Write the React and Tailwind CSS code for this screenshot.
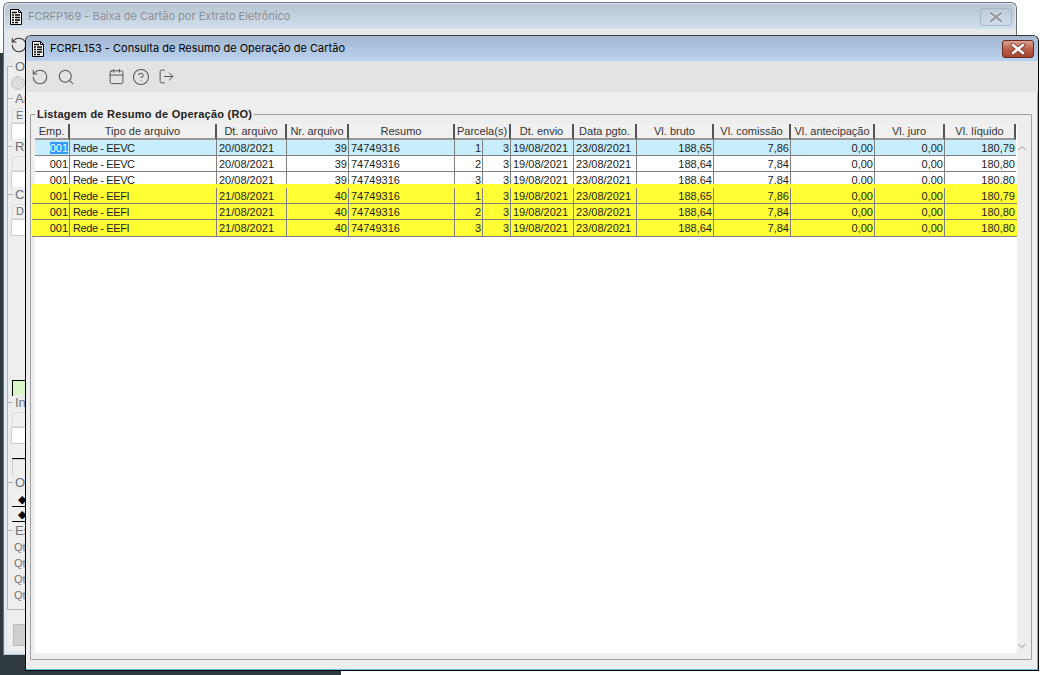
import { RotateCcw, Search, Calendar, CircleHelp, LogOut, ChevronUp, ChevronDown } from 'lucide-react'

const columns = [
  { label: 'Emp.', w: 'w-[35px]' },
  { label: 'Tipo de arquivo', w: 'w-[147px]' },
  { label: 'Dt. arquivo', w: 'w-[70px]' },
  { label: 'Nr. arquivo', w: 'w-[62px]' },
  { label: 'Resumo', w: 'w-[106px]' },
  { label: 'Parcela(s)', w: 'w-[56px]' },
  { label: 'Dt. envio', w: 'w-[63px]' },
  { label: 'Data pgto.', w: 'w-[63px]' },
  { label: 'Vl. bruto', w: 'w-[77px]' },
  { label: 'Vl. comissão', w: 'w-[77px]' },
  { label: 'Vl. antecipação', w: 'w-[84px]' },
  { label: 'Vl. juro', w: 'w-[70px]' },
  { label: 'Vl. líquido', w: 'w-[71px]' },
]

const rows = [
  { tipo: 'Rede - EEVC', dt: '20/08/2021', nr: 39, parc: 1, bruto: '188,65', com: '7,86', liq: '180,79' },
  { tipo: 'Rede - EEVC', dt: '20/08/2021', nr: 39, parc: 2, bruto: '188,64', com: '7,84', liq: '180,80' },
  { tipo: 'Rede - EEVC', dt: '20/08/2021', nr: 39, parc: 3, bruto: '188,64', com: '7,84', liq: '180,80' },
  { tipo: 'Rede - EEFI', dt: '21/08/2021', nr: 40, parc: 1, bruto: '188,65', com: '7,86', liq: '180,79' },
  { tipo: 'Rede - EEFI', dt: '21/08/2021', nr: 40, parc: 2, bruto: '188,64', com: '7,84', liq: '180,80' },
  { tipo: 'Rede - EEFI', dt: '21/08/2021', nr: 40, parc: 3, bruto: '188,64', com: '7,84', liq: '180,80' },
]

function DocIcon() {
  return (
    <svg width="14" height="16" viewBox="0 0 14 16" className="shrink-0">
      <path d="M1.5 .5H9.5L12.5 3.5V15.5H1.5Z" fill="#fff" stroke="#000" />
      <path d="M9.5 .5V3.5H12.5" fill="none" stroke="#000" />
      <path d="M3 3.5H8M3 6H5M6 6H11M3 8.5H5M6 8.5H11M3 11H5M6 11H11M3 13.5H5M6 13.5H9" stroke="#000" strokeWidth="1.6" />
    </svg>
  )
}

function CloseGlyph({ color, outline }) {
  return (
    <svg width="16" height="12" viewBox="0 0 16 12">
      <path d="M3 2L13 10M13 2L3 10" stroke={outline} strokeWidth="4.4" strokeLinecap="round" />
      <path d="M3 2L13 10M13 2L3 10" stroke={color} strokeWidth="2.6" strokeLinecap="round" />
    </svg>
  )
}

function Cell({ w, right, last, className = '', children }) {
  return (
    <div className={`${w} shrink-0 h-full overflow-hidden whitespace-nowrap leading-[16px] ${right ? 'text-right pr-[1px]' : 'pl-[2px]'} ${last ? '' : 'border-r border-[#808080]'} ${className}`}>
      {children}
    </div>
  )
}

function Row({ row, first, height = 'h-4', noBorder, className = '' }) {
  return (
    <div className={`flex ${height} overflow-hidden ${noBorder ? '' : 'border-b border-[#808080]'} ${first ? 'bg-[#c8eefe]' : ''} ${className}`}>
      <Cell w="w-[35px]" right>
        {first ? <span className="bg-[#3399ff] text-white">001</span> : '001'}
      </Cell>
      <Cell w="w-[147px]" className="pl-[3px] tracking-[-0.4px]">{row.tipo}</Cell>
      <Cell w="w-[70px]">{row.dt}</Cell>
      <Cell w="w-[62px]" right>{row.nr}</Cell>
      <Cell w="w-[106px]">74749316</Cell>
      <Cell w="w-[28px]" right>{row.parc}</Cell>
      <Cell w="w-[28px]" right>3</Cell>
      <Cell w="w-[63px]">19/08/2021</Cell>
      <Cell w="w-[63px]">23/08/2021</Cell>
      <Cell w="w-[77px]" right>{row.bruto}</Cell>
      <Cell w="w-[77px]" right>{row.com}</Cell>
      <Cell w="w-[84px]" right>0,00</Cell>
      <Cell w="w-[70px]" right>0,00</Cell>
      <Cell w="w-[71px]" right last>{row.liq}</Cell>
    </div>
  )
}

function SideLegend({ label, h, className = '', children }) {
  return (
    <div className={`${h} relative border-l border-t border-[#b5b5b5] pl-[3px] pt-[9px] ${className}`}>
      <span className="absolute left-[5px] top-[-8px] bg-[#eeeeee] px-[2px] text-[13px] leading-[15px] text-[#66727f]">{label}</span>
      {children}
    </div>
  )
}

function BackWindow() {
  return (
    <div className="absolute left-[3px] top-[2px] w-[1014px] h-[653px] rounded-t-[6px] border border-[#6e7073] border-b-[#b9c6d4] bg-[#dfe8f1] p-[1px] flex flex-col overflow-hidden">
      <div className="h-[25px] shrink-0 flex items-center pl-[4px] gap-[4px] bg-gradient-to-b from-[#b7c4d1] to-[#d2e0ef] rounded-t-[5px]">
        <DocIcon />
        <span className="text-[11px] text-[#8c8f93] ml-[1px]" style={{ fontFamily: 'Inter, sans-serif' }}>FCRFP169 - Baixa de Cartão por Extrato Eletrônico</span>
        <div className="ml-auto mr-[3px] w-[32px] h-[18px] border border-[#a7b6c5] rounded-[3px] flex items-center justify-center">
          <CloseGlyph color="#9a9ea3" outline="#e6ecf2" />
        </div>
      </div>
      <div className="flex-1 mx-[2px] mb-[2px] bg-[#eeeeee] flex flex-col">
        <div className="h-[37px] shrink-0 pl-[3px] pt-[7px] bg-[#e8e8e8]">
          <RotateCcw size={18} strokeWidth={1.4} className="text-[#333]" />
        </div>
        <div className="flex flex-col text-[#5c6f85]">
          <SideLegend label="Or" h="h-[32px]">
            <div className="w-[14px] h-[14px] rounded-full border border-[#c5c5c5] bg-[#ddd]" />
          </SideLegend>
          <SideLegend label="Ar" h="h-[48px]">
            <div className="h-[15px] ml-[1px] border border-[#ddd] text-[11px] leading-[13px] pl-[3px] bg-[#efefef]">E</div>
            <div className="h-[17px] border border-[#ccc] bg-white" />
          </SideLegend>
          <SideLegend label="Re" h="h-[48px]">
            <div className="h-[15px] ml-[1px] border border-[#ddd] bg-[#efefef]" />
            <div className="h-[17px] border border-[#ccc] bg-white" />
          </SideLegend>
          <SideLegend label="Co" h="h-[208px]">
            <div className="h-[15px] ml-[1px] border border-[#ddd] text-[11px] leading-[13px] pl-[3px] bg-[#efefef]">D</div>
            <div className="h-[17px] border border-[#ccc] bg-white" />
            <div className="h-[144px]" />
            <div className="h-[16px] ml-[1px] border border-black bg-[#d9f7c8]" />
          </SideLegend>
          <SideLegend label="In" h="h-[80px]">
            <div className="h-[15px] ml-[1px] border border-[#ddd] bg-[#efefef]" />
            <div className="h-[17px] border border-[#ccc] bg-white" />
            <div className="h-[15px] ml-[1px] bg-[#efefef] border-b border-black" />
            <div className="h-[17px] ml-[1px] border border-[#ccc] bg-[#efefef]" />
          </SideLegend>
          <SideLegend label="Op" h="h-[48px]">
            <div className="h-[15px] ml-[1px] border-b border-black bg-[#efefef] text-[11px] text-black pl-[6px] leading-[15px]">◆</div>
            <div className="h-[15px] ml-[1px] border-b border-black bg-[#efefef] text-[11px] text-black pl-[6px] leading-[15px]">◆</div>
          </SideLegend>
          <SideLegend label="Es" h="h-[80px]" className="border-b">
            <div className="flex flex-col gap-[3px] pt-[1px] pl-[3px] text-[11px] leading-[13px] text-[#6f7680]">
              <span>Qt</span>
              <span>Qt</span>
              <span>Qt</span>
              <span>Qt</span>
            </div>
          </SideLegend>
        </div>
        <div className="mt-[14px] ml-[6px] h-[22px] w-[60px] bg-[#cfcfcf] border border-[#bbb]" />
      </div>
    </div>
  )
}

function FrontWindow() {
  return (
    <div className="absolute left-[25px] top-[35px] w-[1014px] h-[636px] rounded-t-[6px] border border-t-[#3a3a3a] border-l-black border-r-black border-b-black bg-[#eeeeee] flex flex-col shadow-[inset_-1px_-1px_0_#5cc1ea]">
      <div className="h-[25px] shrink-0 flex items-center pl-[5px] gap-[4px] bg-gradient-to-b from-[#a3b8d0] to-[#b9d2ef] rounded-t-[5px]">
        <DocIcon />
        <span className="text-[11px] text-black ml-[1px]" style={{ fontFamily: 'Inter, sans-serif' }}>FCRFL153 - Consulta de Resumo de Operação de Cartão</span>
        <div className="ml-auto mr-[4px] w-[32px] h-[18px] border border-[#6b2a20] rounded-[3px] bg-gradient-to-b from-[#d9a595] via-[#b9604c] to-[#a8452f] flex items-center justify-center">
          <CloseGlyph color="#ffffff" outline="#8a3a2c" />
        </div>
      </div>
      <div className="h-[31px] shrink-0 bg-[#e3e3e3] flex items-center pl-[5px] text-[#555]">
        <RotateCcw size={18} strokeWidth={1.4} />
        <Search size={18} strokeWidth={1.4} className="ml-[8px]" />
        <Calendar size={17} strokeWidth={1.4} className="ml-[33px]" />
        <CircleHelp size={18} strokeWidth={1.4} className="ml-[7px]" />
        <LogOut size={17} strokeWidth={1.4} className="ml-[8px]" />
      </div>
      <div className="flex-1 flex flex-col pl-[4px] pr-[6px] pt-[22px] pb-[10px]">
        <div className="relative flex-1 border border-[#a0a0a0] rounded-[1px] pl-[4px] pt-[9px] pb-[6px] flex flex-col">
          <span className="absolute left-[4px] top-[-8px] bg-[#eeeeee] px-[2px] text-[11px] font-bold tracking-[0.23px] leading-[14px] text-[#222]">Listagem de Resumo de Operação (RO)</span>
          <div className="flex-1 bg-white flex flex-col text-[11px] text-[#1c1c1c] relative">
            <div className="flex h-[16px] shrink-0">
              {columns.map((col) => (
                <div key={col.label} className={`${col.w} shrink-0 text-center leading-[15px] bg-[#f0f0f0] border-r-2 border-b-2 border-r-[#555] border-b-[#999] text-[#333] overflow-hidden whitespace-nowrap`}>
                  {col.label}
                </div>
              ))}
            </div>
            <div className="w-[981px]">
              <Row row={rows[0]} first />
              <Row row={rows[1]} />
              <Row row={rows[2]} height="h-[12px]" noBorder />
              <div className="bg-[#ffff33] -ml-[3px] -mr-[1px]">
                <div className="h-[4px]" />
                <Row row={rows[3]} className="pl-[3px]" />
                <Row row={rows[4]} className="pl-[3px]" />
                <Row row={rows[5]} height="h-[17px]" className="pl-[3px]" />
              </div>
            </div>
            {/* scrollbar lane */}
            <div className="absolute right-0 top-0 bottom-0 w-[14px] bg-[#eeeeee] flex flex-col items-center justify-between pt-[18px] pb-[1px] pr-[4px] text-[#c0c0c0]">
              <ChevronUp size={12} strokeWidth={3} />
              <ChevronDown size={12} strokeWidth={3} />
            </div>
          </div>
        </div>
      </div>
    </div>
  )
}

export default function App() {
  return (
    <div className="relative w-[1043px] h-[675px] bg-white overflow-hidden" style={{ fontFamily: '"Liberation Sans", sans-serif' }}>
      {/* desktop behind the windows */}
      <div className="absolute left-0 top-[53px] w-[4px] h-[622px] bg-[#2e3a3d]" />
      <div className="absolute left-0 top-[655px] w-[341px] h-[20px] bg-[#2e3a3d]" />
      <BackWindow />
      <FrontWindow />
    </div>
  )
}
